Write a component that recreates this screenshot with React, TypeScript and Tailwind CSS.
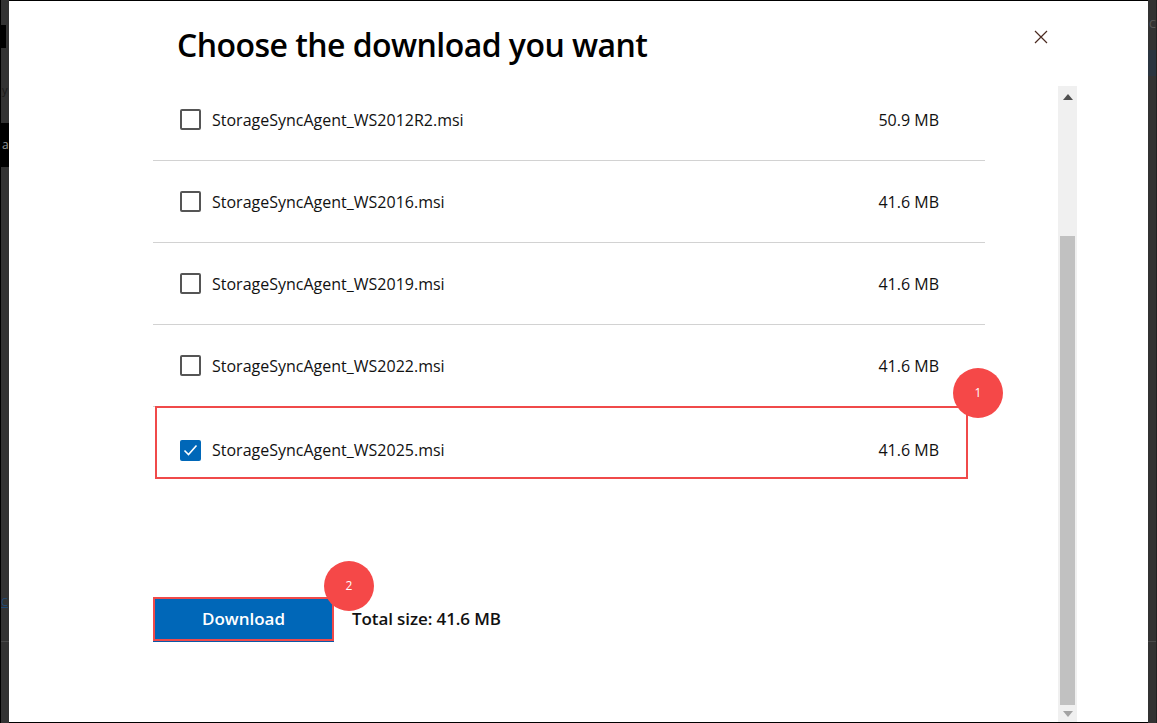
import React from "react";

const files = [
  { name: "StorageSyncAgent_WS2012R2.msi", size: "50.9 MB", checked: false },
  { name: "StorageSyncAgent_WS2016.msi", size: "41.6 MB", checked: false },
  { name: "StorageSyncAgent_WS2019.msi", size: "41.6 MB", checked: false },
  { name: "StorageSyncAgent_WS2022.msi", size: "41.6 MB", checked: false },
  { name: "StorageSyncAgent_WS2025.msi", size: "41.6 MB", checked: true },
];

const font = { fontFamily: '"Open Sans", "Noto Sans", Arial, sans-serif' };

function Checkbox({ checked }: { checked: boolean }) {
  if (checked) {
    return (
      <div className="w-[21px] h-[21px] rounded-[2px] bg-[#0067b8] flex items-center justify-center shrink-0">
        <svg width="15" height="12" viewBox="0 0 15 12" fill="none">
          <path d="M1.5 6.5 L5.5 10.5 L13.5 1.5" stroke="white" strokeWidth="1.6" />
        </svg>
      </div>
    );
  }
  return <div className="w-[21px] h-[21px] rounded-[2px] border-2 border-[#555555] bg-white shrink-0" />;
}

function Badge({ n }: { n: string }) {
  return (
    <div className="w-[50px] h-[50px] rounded-full bg-[#f54848] flex items-center justify-center text-white text-[12px]">
      {n}
    </div>
  );
}

export default function App() {
  return (
    <div className="w-[1157px] h-[723px] flex overflow-hidden bg-[#333333]" style={font}>
      {/* left strip of underlying page */}
      <div className="w-[9px] h-full bg-[#333333] border-l border-black relative overflow-hidden shrink-0">
        <div className="absolute left-0 top-[25px] w-[5px] h-[23px] bg-black" />
        <div className="absolute left-[1px] top-[84px] text-[11px] text-[#1a1a1a] leading-none">y</div>
        <div className="absolute left-0 top-[123px] w-[9px] h-[44px] bg-black" />
        <div className="absolute left-[1px] top-[139px] text-[12px] text-[#9a9a9a] leading-none">a</div>
        <div className="absolute left-0 top-[596px] text-[11px] text-[#1e4a78] leading-none underline">C</div>
        <div className="absolute left-0 top-[641px] w-[9px] h-px bg-[#4a4a4a]" />
      </div>

      {/* dialog */}
      <div className="w-[1139px] h-full bg-white border-t border-b border-black flex shrink-0">
        <div className="w-[1049px] flex flex-col relative">
          <div className="h-[78px] flex items-start justify-between pl-[168px] pr-[10px]">
            <h1 className="text-[32px] leading-[40px] font-semibold text-black mt-[24px] tracking-[-0.55px]">
              Choose the download you want
            </h1>
            <svg width="14" height="14" viewBox="0 0 14 14" className="mt-[29px]">
              <path d="M1 1 L13 13 M13 1 L1 13" stroke="#4a2a20" strokeWidth="1.2" />
            </svg>
          </div>

          <div className="ml-[144px] w-[832px] flex flex-col">
            {files.map((f, i) => (
              <div
                key={f.name}
                className={`h-[82px] flex items-center pl-[27px] pr-[46px] ${i < files.length - 1 ? "border-b border-[#d2d2d2]" : "pt-[4px]"}`}
              >
                <Checkbox checked={f.checked} />
                <span className="ml-[11px] text-[16px] text-[#111111] flex-1">{f.name}</span>
                <span className="text-[16px] text-[#111111]">{f.size}</span>
              </div>
            ))}
          </div>

          <div className="ml-[144px] mt-[108px] flex items-center">
            <button className="w-[181px] h-[44px] bg-[#0067b8] border-2 border-[#f04a4a] text-white text-[17px] font-semibold shadow-[0_1px_0_#0a58a8]">
              Download
            </button>
            <span className="ml-[18px] text-[17px] font-semibold text-[#111111] tracking-[-0.1px]">Total size: 41.6 MB</span>
          </div>

          {/* annotation overlays */}
          <div className="absolute left-[146px] top-[405px] w-[813px] h-[73px] border-2 border-[#f04a4a] pointer-events-none" />
          <div className="absolute left-[944px] top-[367px]">
            <Badge n="1" />
          </div>
          <div className="absolute left-[315px] top-[560px]">
            <Badge n="2" />
          </div>
        </div>

        {/* scrollbar */}
        <div className="w-[19px] mt-[85px] bg-[#f0f0f0] flex flex-col items-center shrink-0">
          <div className="h-[22px] flex items-center justify-center">
            <svg width="10" height="6" viewBox="0 0 10 6">
              <path d="M0 6 L5 0 L10 6 Z" fill="#505050" />
            </svg>
          </div>
          <div className="w-[15px] h-[469px] mt-[128px] bg-[#c1c1c1]" />
          <div className="flex-1 flex items-center justify-center">
            <svg width="10" height="6" viewBox="0 0 10 6">
              <path d="M0 0 L10 0 L5 6 Z" fill="#a3a3a3" />
            </svg>
          </div>
        </div>
      </div>

      {/* right strip */}
      <div className="w-[9px] h-full bg-[#333333] border-r border-[#222222] relative overflow-hidden shrink-0">
        <div className="absolute left-[1px] top-[18px] text-[11px] text-[#5a5a5a] leading-none">C</div>
        <div className="absolute left-0 top-[50px] w-[9px] h-[26px] bg-[#2b3540]" />
        <div className="absolute left-0 top-[641px] w-[9px] h-px bg-[#4a4a4a]" />
      </div>
    </div>
  );
}
